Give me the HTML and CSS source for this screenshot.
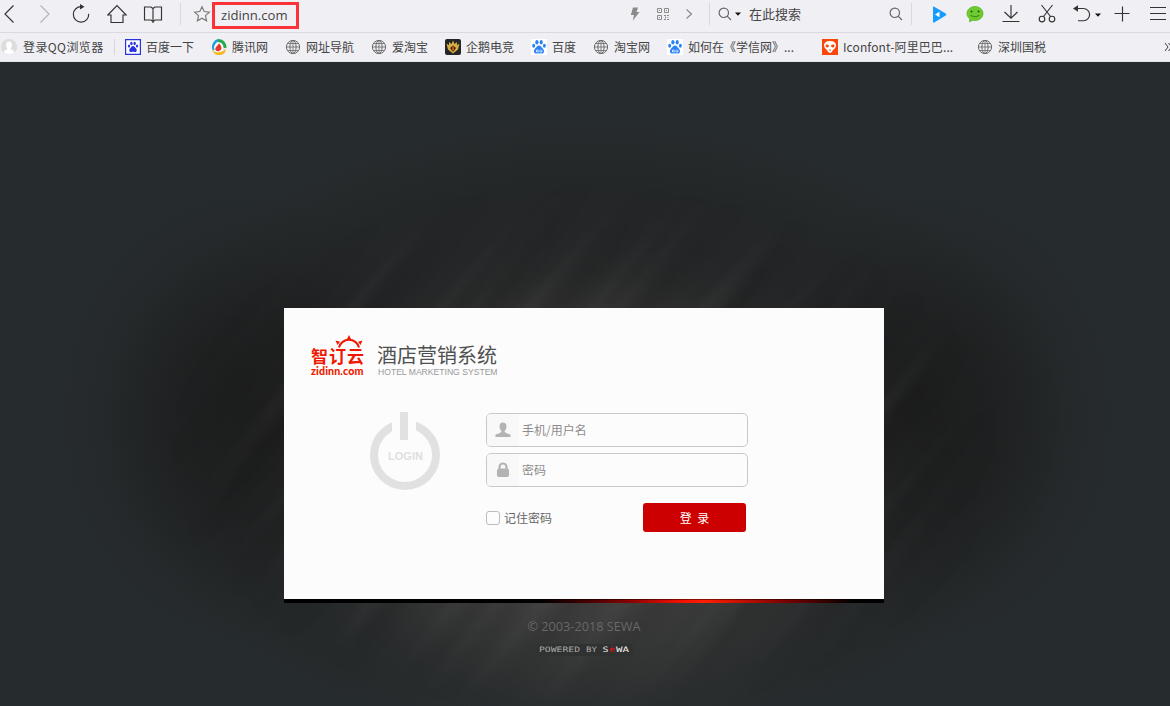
FILE: index.html
```html
<!DOCTYPE html>
<html lang="zh-CN">
<head>
<meta charset="utf-8">
<title>酒店营销系统</title>
<link rel="stylesheet" href="styles.css">
</head>
<body>
<svg class="defs" width="0" height="0">
  <symbol id="globe" viewBox="0 0 16 16"><g fill="none" stroke="#686868" stroke-width="1"><circle cx="8" cy="8" r="6.6"/><ellipse cx="8" cy="8" rx="3.1" ry="6.6"/><path d="M8 1.4v13.2M1.4 8h13.2M2.6 4.5h10.8M2.6 11.5h10.8" stroke-width=".8"/></g></symbol>
  <symbol id="paw" viewBox="0 0 16 16"><ellipse cx="5.9" cy="3.3" rx="1.6" ry="2.2"/><ellipse cx="10.2" cy="3.3" rx="1.6" ry="2.2"/><ellipse cx="2.7" cy="6.8" rx="1.5" ry="2"/><ellipse cx="13.4" cy="6.8" rx="1.5" ry="2"/><path d="M8 6.5c-2 0-2.3 1.7-3.8 3-1.7 1.5-1.8 4.9 1 5.1 1.2.1 1.8-.3 2.8-.3s1.700.4 2.900.3c2.700-.2 2.600-3.500.9-5.100C10.300 8.200 10 6.500 8 6.500z"/></symbol>
  <symbol id="search" viewBox="0 0 14 14"><path d="M9.400 9.400 13 13M10.500 5.800a4.700 4.700 0 1 1-9.400 0a4.700 4.700 0 0 1 9.400 0z" fill="none" stroke="currentColor" stroke-width="1.200"/></symbol>
</svg>

<header class="browser">
  <div class="toolbar">
    <nav class="group nav">
      <span class="cell"><svg width="12" height="20" viewBox="0 0 12 20"><path d="M10.500 1.500 2 10l8.500 8.500"/></svg></span>
      <span class="cell faded"><svg width="12" height="20" viewBox="0 0 12 20"><path d="M1.500 1.500 10 10l-8.500 8.500"/></svg></span>
      <span class="cell"><svg width="20" height="20" viewBox="0 0 20 20"><path d="M17.700 9.800a7.700 7.700 0 1 1-7.200-7.100"/><path d="M9 0l4.500 2.800L9 5.600z" class="solid"/></svg></span>
      <span class="cell"><svg width="20" height="20" viewBox="0 0 20 20"><path d="M.8 11 10 1.500l9.200 9.500H16v7.500H4V11z"/></svg></span>
      <span class="cell"><svg width="20" height="20" viewBox="0 0 20 20"><path d="M10 4.500V19M1.500 3H8l2 1.500L12 3h6.500v13H12l-2 1.500L8 16H1.500z"/></svg></span>
    </nav>
    <div class="address">
      <svg class="star" width="18" height="18" viewBox="0 0 18 18"><path d="m9 1.800 2.200 4.800 5.200.6-3.900 3.500 1.100 5.100L9 13.200l-4.600 2.600 1.100-5.100L1.600 7.200l5.200-.6z"/></svg>
      <span class="url">zidinn.com</span>
    </div>
    <div class="group tools">
      <svg width="10" height="14" viewBox="0 0 10 14"><path d="M3 .5h5L6.500 5h3L2.800 13.700 4 8H.8z" fill="#8a8a8c"/></svg>
      <svg class="qr" width="12" height="12" viewBox="0 0 12 12"><path d="M.5.500h4v4h-4zM7.500.500h4v4h-4zM.5 7.500h4v4h-4zM2 2.500h1M9 2.500h1M2 9.500h1M7 7.500h2M10 7.500h2M8.500 8.500v2M11 9v1M7 11.500h2M10 11.500h2"/></svg>
      <svg class="more" width="8" height="12" viewBox="0 0 8 12"><path d="m1.500 1.500 5 4.500-5 4.500"/></svg>
    </div>
    <div class="searchbar">
      <svg class="mag" width="14" height="14"><use href="#search"/></svg>
      <svg class="caret" width="6" height="4" viewBox="0 0 6 4"><path d="M0 .5h6L3 3.700z"/></svg>
      <span class="hint">在此搜索</span>
      <svg class="mag go" width="14" height="14"><use href="#search"/></svg>
    </div>
    <div class="group apps">
      <span class="cell"><svg width="18" height="18" viewBox="0 0 18 18"><path d="M3 2.500q0-1.300 1.200-.7l11.500 6.800q1.200.9 0 1.800L4.200 17.500Q3 18 3 16.700z" fill="#159cff" stroke="none"/><path d="M9.500 6.800v5.500L5 9.500z" fill="#fff" stroke="none"/></svg></span>
      <span class="cell"><svg width="18" height="18" viewBox="0 0 18 18"><path d="M9 1.500c4.500 0 8 3 8 7s-3.500 7-8 7l-2-.3-3.500 1.600.3-3C2 12.600 1 10.800 1 8.500c0-4 3.500-7 8-7z" fill="#6dcb31" stroke="#51ad20" stroke-width=".7"/><path d="M4.500 10.500q4.500 2.600 9 0" stroke="#37780f" stroke-width=".9"/><circle cx="5.500" cy="6.500" r="1" fill="#205009" stroke="none"/><circle cx="12.500" cy="6.500" r="1" fill="#205009" stroke="none"/></svg></span>
      <span class="cell"><svg width="18" height="20" viewBox="0 0 18 20"><path d="M9 1v13M2.500 8 9 14.200 15.500 8M.5 17.500h17"/></svg></span>
      <span class="cell"><svg width="18" height="20" viewBox="0 0 18 20"><path d="m3.500 1 9 11.500M14.500 1l-9 11.500"/><circle cx="4" cy="15" r="2.800"/><circle cx="14" cy="15" r="2.800"/></svg></span>
      <span class="cell undo"><svg width="18" height="20" viewBox="0 0 18 20"><path d="M2 4.500h8.500a6 6 0 0 1 0 12.200H5"/><path d="M0 4.500l5-3.200v6.400z" class="solid"/></svg><svg class="caret" width="6" height="4" viewBox="0 0 6 4"><path d="M0 .5h6L3 3.700z"/></svg></span>
      <span class="cell"><svg width="16" height="16" viewBox="0 0 16 16"><path d="M8.500.5v15M.5 7.500h15"/></svg></span>
      <span class="cell"><svg width="16" height="16" viewBox="0 0 16 16"><path d="M0 1.500h16M0 7.500h16M0 13.500h16"/></svg></span>
    </div>
  </div>

  <div class="bookmarks">
    <span class="mark"><svg width="16" height="16" viewBox="0 0 16 16"><circle cx="8" cy="8" r="8" fill="#ddd"/><path d="M5 6q0-3.500 3-3.500T11 6q0 2-1.500 3.500.5 1 3.500 2.500v2q-5 3-10 0v-2q3-1.500 3.500-2.500Q5 8 5 6z" fill="#fff"/></svg><span class="label account">登录QQ浏览器</span></span>
    <span class="split"></span>
    <span class="mark"><svg width="16" height="16" viewBox="0 0 16 16"><path d="M.6.600h14.800v14.800H.6z" fill="#fff" stroke="#2932e1" stroke-width="1.200"/><use href="#paw" x="2" y="2" width="12" height="12" fill="#2932e1"/></svg><span class="label">百度一下</span></span>
    <span class="mark"><svg width="16" height="16" viewBox="0 0 16 16"><path d="M3 11A7 7 0 0 1 8 1" fill="none" stroke="#1a9fe0" stroke-width="2.500"/><path d="M7 1.600q6.500 0 7.200 7.400" fill="none" stroke="#25ad4c" stroke-width="3"/><path d="M1 11q6 5.500 14-1-1 6-7 6-5 0-7-5z" fill="#f5b70d"/><circle cx="7.500" cy="8.500" r="4.300" fill="#fff"/><path d="M8 4.500c3 2 3.500 6.500 0 7.500s-4.500-2-3-4z" fill="#e5372c"/></svg><span class="label">腾讯网</span></span>
    <span class="mark"><svg width="16" height="16"><use href="#globe"/></svg><span class="label">网址导航</span></span>
    <span class="mark"><svg width="16" height="16"><use href="#globe"/></svg><span class="label">爱淘宝</span></span>
    <span class="mark"><svg width="16" height="16" viewBox="0 0 16 16"><rect width="16" height="16" rx="2" fill="#242527"/><path d="M8 1.500 9.500 5l2.500-2v3.200l2.500-1.700-1.500 6L8 14.500l-5-4-1.500-6L4 6.200V3l2.500 2z" fill="#d8ad45"/><path d="M8 6.500 11 9l-3 4-3-4z" fill="#3b2410"/><path d="M8 7.500v4" stroke="#e66d18" stroke-width="1.500"/></svg><span class="label">企鹅电竞</span></span>
    <span class="mark"><svg width="16" height="16" viewBox="0 0 16 16"><path fill="#fff" d="M0 0h16v16H0z"/><use href="#paw" width="16" height="16" fill="#2c83f5"/><path d="M5.500 11h1.700v2H5.500zM9 10.700V13h1.800v-2.300" fill="none" stroke="#fff" stroke-width=".7"/></svg><span class="label">百度</span></span>
    <span class="mark"><svg width="16" height="16"><use href="#globe"/></svg><span class="label">淘宝网</span></span>
    <span class="mark"><svg width="16" height="16" viewBox="0 0 16 16"><path fill="#fff" d="M0 0h16v16H0z"/><use href="#paw" width="16" height="16" fill="#2c83f5"/><path d="M5.500 11h1.700v2H5.500zM9 10.700V13h1.800v-2.300" fill="none" stroke="#fff" stroke-width=".7"/></svg><span class="label">如何在《学信网》...</span></span>
    <span class="mark"><svg width="16" height="16" viewBox="0 0 16 16"><path fill="#fa4608" d="M0 0h16v16H0z"/><path d="M2 6.500Q2 2 8 2t6 4.500q0 2.500-3 4.500-1 3-3 3t-3-3Q2 9 2 6.500z" fill="#fff"/><ellipse cx="5.200" cy="7" rx="1.700" ry="1.400" fill="#fa4608"/><ellipse cx="10.800" cy="7" rx="1.700" ry="1.400" fill="#fa4608"/><path d="M7 11h2" stroke="#fa4608"/></svg><span class="label iconfont">Iconfont-阿里巴巴...</span></span>
    <span class="mark"><svg width="16" height="16"><use href="#globe"/></svg><span class="label">深圳国税</span></span>
    <span class="mark"><svg width="8" height="10" viewBox="0 0 8 10"><path d="m1 1 3 4-3 4M4.500 1l3 4-3 4" fill="none" stroke="#444"/></svg></span>
  </div>
</header>

<main class="page">
  <section class="card">
    <div class="brand">
      <div class="logo">
        <svg class="sun" width="30" height="16" viewBox="0 0 30 16"><path d="M5 12.500a10.300 10.300 0 0 1 20 0" fill="none" stroke="#f01800" stroke-width="2"/><path d="m15 0 2 4h-4zM1.500 5.500l4.500 1.200L3.500 10zM28.500 5.500 24 6.700l2.500 3.300z" fill="#f01800"/></svg>
        <span class="logo-name">智订云</span>
        <span class="logo-site">zidinn.com</span>
      </div>
      <div class="product">
        <h1>酒店营销系统</h1>
        <p>HOTEL MARKETING SYSTEM</p>
      </div>
    </div>
    <div class="login">
      <svg class="power" width="70" height="78" viewBox="0 0 70 78"><circle cx="35" cy="43" r="31" fill="none" stroke="#e1e1e1" stroke-width="8"/><path d="M22 0h24v30H22z" fill="#fcfcfc"/><path d="M30 0h8v28h-8z" fill="#e1e1e1"/><text x="35.500" y="48" text-anchor="middle" textLength="35">LOGIN</text></svg>
      <form class="form">
        <label class="field"><span class="icon"><svg width="16" height="16" viewBox="0 0 16 16"><path d="M4.500 4.500Q4.500.500 8 .500t3.500 4q0 3-2 5 .5 1.500 6 3V15H.5v-2.500q5.500-1.500 6-3-2-2-2-5z"/></svg></span><input type="text" placeholder="手机/用户名"></label>
        <label class="field"><span class="icon"><svg width="16" height="16" viewBox="0 0 16 16"><path d="M4.500 8V5a3.500 3.500 0 0 1 7 0v3" fill="none" stroke="#b3b3b3" stroke-width="2.200"/><rect x="2" y="6.500" width="12" height="8.500" rx="2"/></svg></span><input type="password" placeholder="密码"></label>
        <div class="actions">
          <label class="remember"><span class="box"></span>记住密码</label>
          <button type="button">登&nbsp; 录</button>
        </div>
      </form>
    </div>
  </section>
  <div class="glow"></div>
  <footer class="footer">
    <p>© 2003-2018 SEWA</p>
    <svg class="powered" width="96" height="12" viewBox="0 0 96 12"><text x="2" y="8" textLength="41" lengthAdjust="spacingAndGlyphs">POWERED</text><text x="49" y="8" textLength="11" lengthAdjust="spacingAndGlyphs">BY</text><text x="65.500" y="8" textLength="6" lengthAdjust="spacingAndGlyphs" class="white">S</text><text x="72" y="8" textLength="6" lengthAdjust="spacingAndGlyphs" class="red">ė</text><text x="79" y="8" textLength="13" lengthAdjust="spacingAndGlyphs" class="white">WA</text></svg>
  </footer>
</main>
</body>
</html>
```

FILE: styles.css
```css
* { box-sizing: border-box; }
body {
  margin: 0;
  width: 1170px;
  height: 706px;
  overflow: hidden;
  font: 12px/16px "Noto Sans CJK SC", "Noto Sans", sans-serif;
  color: #444;
}
svg { display: block; flex: none; }
.defs { position: absolute; }

.browser { height: 62px; background: #f0eff4; border-bottom: 1px solid #e2e5ec; overflow: hidden; }
.toolbar { display: flex; height: 33px; border-bottom: 1px solid #dad9de; padding-bottom: 4px; }
.group { display: flex; flex: none; align-items: center; }
.cell { display: flex; flex: none; width: 36px; justify-content: center; align-items: center; }
.cell svg { fill: none; stroke: #333; stroke-width: 1.15; }
.cell .solid { fill: #333; stroke: none; }
.faded svg { stroke: #b5b4b8; }
.nav { margin-left: -9px; }
.address {
  display: flex; align-items: center; flex: none;
  width: 450px; margin-left: 9px;
  background: linear-gradient(#d9d8dd, #d9d8dd) 0 3px / 1px 22px no-repeat;
}
.star { margin-left: 13px; fill: none; stroke: #777; stroke-width: 1.1; }
.url {
  width: 87px; height: 27px; margin: 2px 0 0 1px; padding-left: 6px;
  border: 3px solid #fb3238;
  font: 13.1px/20px "Open Sans", sans-serif;
  align-self: flex-start; flex: none;
}
.tools svg.qr, .tools svg.more { fill: none; stroke: #8a8a8c; }
.qr { margin-left: 17px; }
.more { margin-left: 16px; stroke-width: 1.2; }
.tools { width: 79px; }
.searchbar {
  display: flex; align-items: center; flex: none;
  width: 203px; padding-left: 9px; color: #666;
  background: linear-gradient(#d9d8dd, #d9d8dd) 0 3px / 1px 22px no-repeat,
              linear-gradient(#d9d8dd, #d9d8dd) 100% 3px / 1px 22px no-repeat;
}
.caret path { fill: #111; stroke: none; }
.searchbar .caret { margin-left: 3px; }
.hint { margin-left: 8px; font-size: 13px; color: #444; white-space: nowrap; }
.go { margin-left: auto; margin-right: 9px; }
.apps { margin-left: 9px; }
.undo { position: relative; width: 39px; padding-right: 5px; }
.undo .caret { position: absolute; right: 3px; top: 9px; }

.bookmarks {
  display: grid; height: 28px; margin-left: 1px; align-items: center;
  grid-template-columns: 113px 11px 86px 74px 86px 74px 86px 62px 74px 155px 155px 187px 8px;
}
.mark { display: flex; align-items: center; gap: 5px; white-space: nowrap; }
.account { margin-left: 1px; letter-spacing: .4px; }
.iconfont { letter-spacing: .1px; }
.split { width: 1px; height: 16px; background: #d9d8dd; }

.page {
  position: relative; height: 644px; padding-top: 246px;
  display: flex; flex-direction: column; align-items: center; isolation: isolate;
  padding-right: 2px;
  background:
    radial-gradient(ellipse 340px 290px at 588px 430px, rgba(80,80,78,.75), rgba(80,80,78,.58) 41%, rgba(80,80,78,.3) 64%, rgba(80,80,80,.13) 76%, rgba(80,80,80,.03) 90%, transparent),
    radial-gradient(ellipse 190px 230px at 245px 355px, rgba(26,26,26,.75), rgba(26,26,26,.5) 40%, rgba(26,26,26,.12) 75%, transparent),
    radial-gradient(ellipse 190px 230px at 930px 355px, rgba(26,26,26,.75), rgba(26,26,26,.5) 40%, rgba(26,26,26,.12) 75%, transparent),
    radial-gradient(ellipse 480px 310px at 585px 370px, #202020 0, #202121 40%, #232425 60%, #242728 80%, #262b2d);
  background-color: #262b2d;
}
.page::before {
  content: ""; position: absolute; inset: 0; z-index: -1;
  background:
    repeating-linear-gradient(130deg, transparent 0 17px, rgba(255,255,255,.035) 27px, transparent 36px, rgba(0,0,0,.1) 49px, transparent 67px),
    repeating-linear-gradient(127deg, transparent 0 31px, rgba(255,255,255,.03) 41px, rgba(0,0,0,.08) 54px, transparent 69px 97px);
  filter: blur(3px);
  -webkit-mask-image: radial-gradient(ellipse 420px 270px at 585px 390px, #000 50%, transparent);
  mask-image: radial-gradient(ellipse 420px 270px at 585px 390px, #000 50%, transparent);
}
.card { width: 600px; height: 291px; background: #fcfcfc; padding: 27px 26px; flex: none; }
.brand { display: flex; height: 43px; }
.logo { position: relative; width: 56px; padding: 13px 0 0 1px; color: #f01800; white-space: nowrap; }
.sun { position: absolute; left: 24px; top: 0; }
.logo-name { display: block; font-size: 17px; line-height: 16px; font-weight: 700; letter-spacing: 1px; }
.logo-site { display: block; margin-top: 3px; font: 900 10.6px/9px Lato, sans-serif; letter-spacing: .15px; }
.product { margin-left: 11px; padding-top: 9px; }
h1 { margin: 0; font-size: 20px; line-height: 22px; font-weight: 400; color: #505050; white-space: nowrap; }
.product p { margin: 1px 0 0 1px; font: 8.6px/10px "Liberation Sans", sans-serif; color: #999; white-space: nowrap; }
.login { display: flex; padding: 34px 0 0 60px; }
.power text { font: bold 11px "Liberation Sans", sans-serif; fill: #dfdfdf; }
.form { width: 262px; margin: 1px 0 0 46px; }
.field {
  display: flex; height: 34px; margin-bottom: 6px; overflow: hidden;
  border: 1px solid #c8c8c8; border-radius: 5px;
}
.icon { display: flex; width: 32px; align-items: center; justify-content: center; background: #f8f8f8; fill: #b3b3b3; }
input { border: 0; outline: 0; padding: 0 0 0 3px; background: none; font: inherit; width: 220px; }
input::placeholder { color: #8c8c8c; }
.actions { display: flex; justify-content: space-between; align-items: center; padding: 10px 2px 0 0; }
.remember { display: flex; align-items: center; gap: 4px; color: #666; }
.box { width: 14px; height: 14px; border: 1px solid #bbb; border-radius: 3px; }
button { width: 103px; height: 29px; border: 0; border-radius: 3px; background: #c00; color: #fff; font: inherit; padding: 0; }
.glow {
  width: 600px; height: 4px; flex: none;
  background: linear-gradient(90deg, #000 43%, #700 56%, #f01000 66%, #ff1e00 70%, #700 84%, #000 95%);
  box-shadow: inset 0 1px rgba(0,0,0,.45);
}
.footer { display: flex; flex-direction: column; align-items: center; padding-top: 14px; }
.footer p { margin: 0; font: 12.7px/18px "Open Sans", sans-serif; color: #686868; }
.powered { margin: 9px 0 0 2px; background: #303131; }
.powered text { font: 7.5px "DejaVu Sans Mono", monospace; fill: #aaa; }
.powered .white { fill: #f2f2f2; }
.powered .red { fill: #f01010; }
```
